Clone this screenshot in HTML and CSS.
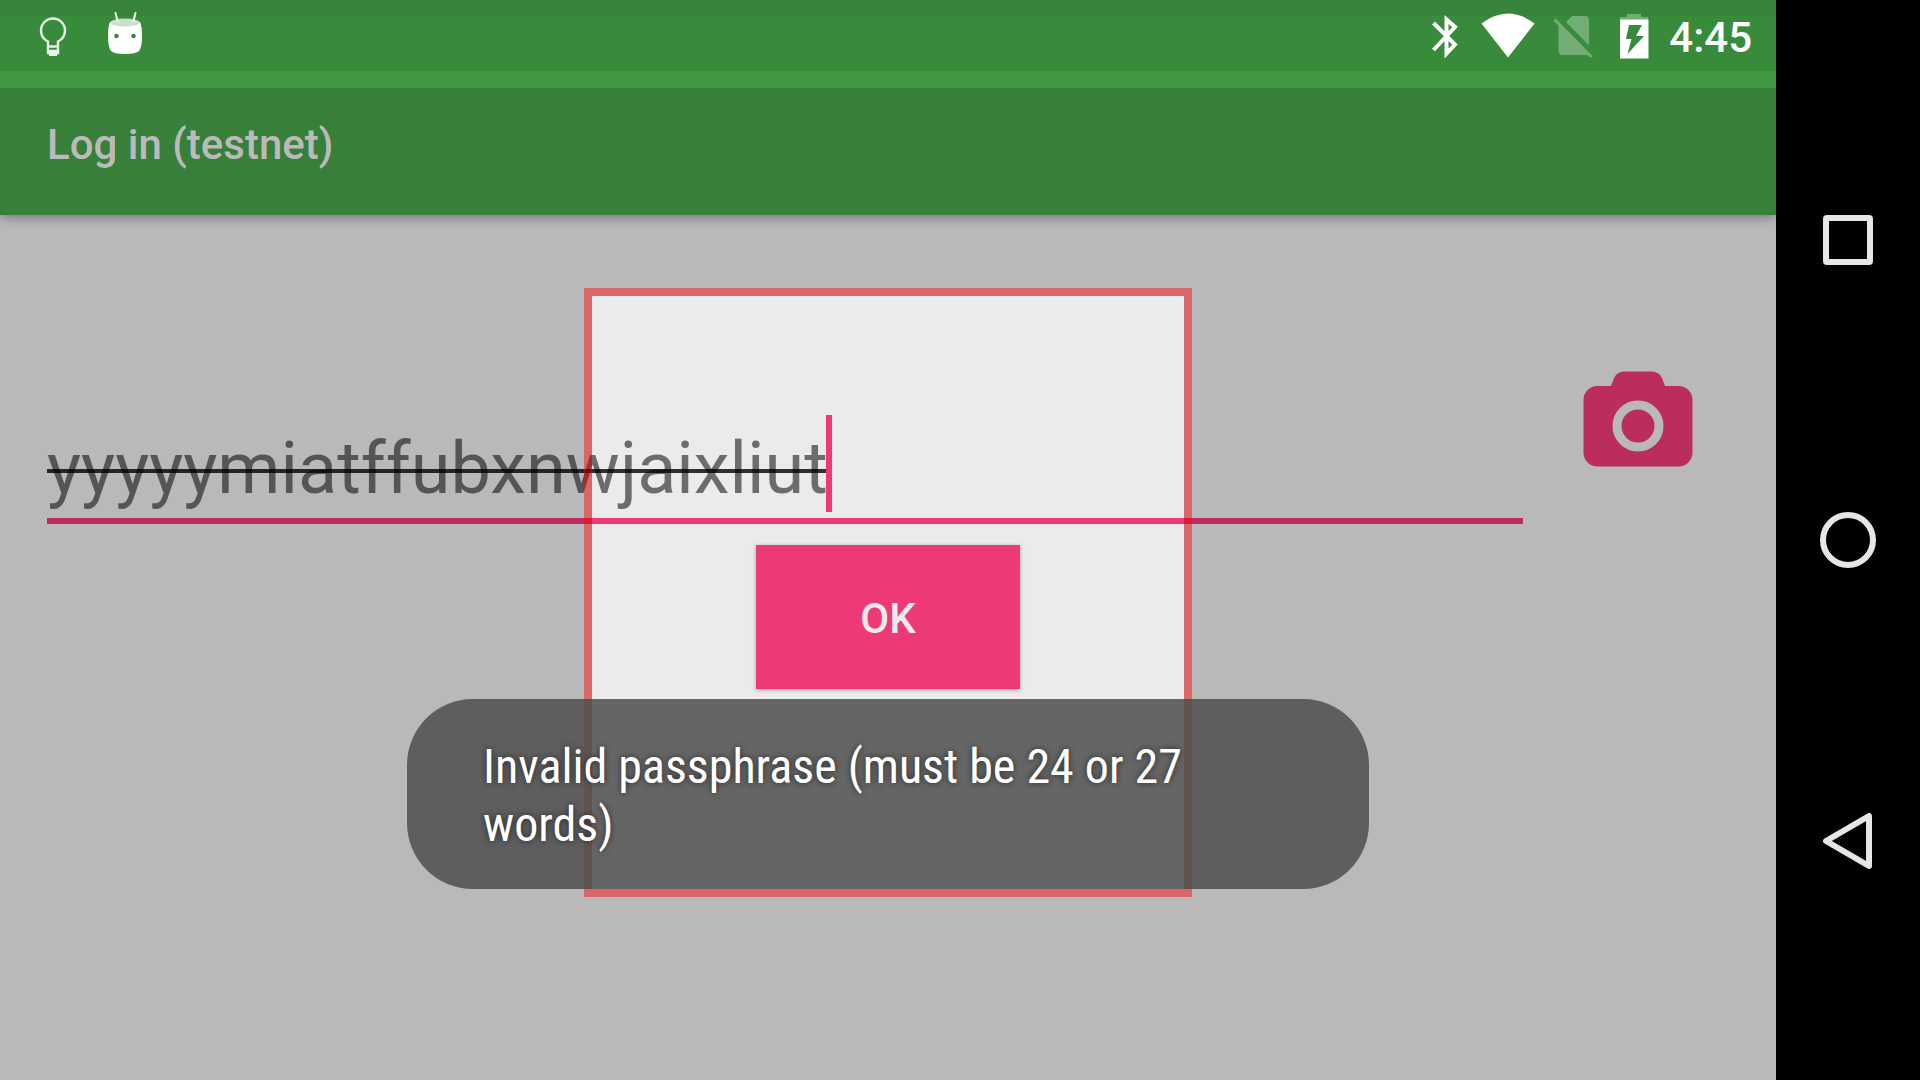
FILE: index.html
```
<!DOCTYPE html>
<html lang="en">
<head>
<meta charset="utf-8">
<title>Log in (testnet)</title>
<link rel="stylesheet" href="styles.css">
</head>
<body>
<div class="app">
  <div class="status-bar">
    <div class="status-group notifications">
      <svg width="28" height="48" viewBox="0 0 28 48" fill="none" stroke="#e8f2e8" stroke-width="2.400"><path d="M9 29.500C4 27 2 23 2 18.500A12 12 0 0 1 26 18.500C26 23 24 27 19 29.500V41H9z"/><path d="M9 34.500H19M9 39H19"/><path d="M10 42H18" stroke-width="4"/></svg>
      <svg width="36" height="48" viewBox="0 0 36 48"><path d="M3 10Q18 5 33 10Q35 14 35 24Q35 35 32 39Q29 42 18 42Q7 42 4 39Q1 35 1 24Q1 14 3 10z" fill="#fff"/><ellipse cx="18" cy="10.500" rx="14.500" ry="4" fill="#c9dfca"/><path d="M8.500 1L10.500 9M28.500 1L26.500 9" stroke="#fff" stroke-width="2" stroke-linecap="round"/><circle cx="9.500" cy="24" r="2.300" fill="#388a3b"/><circle cx="26.500" cy="24" r="2.300" fill="#388a3b"/></svg>
    </div>
    <div class="status-group">
      <svg width="28" height="48" viewBox="0 0 28 48" fill="none" stroke="#fff" stroke-width="4"><path d="M2.500 11L24 32.500L15.500 41.500V7.500L24 15L2.500 38"/></svg>
      <svg class="wifi" width="54" height="48" viewBox="0 0 54 48"><path d="M.5 11.500Q27 -8.500 53.500 11.500L27 45.500z" fill="#fff"/></svg>
      <svg class="sim" width="40" height="48" viewBox="0 0 40 48" fill="#73ad76"><path d="M19 4H32Q36 4 36 8V33.500L13 10z"/><path d="M5.500 11.500L37 43H9.500Q5.500 43 5.500 39z"/><path d="M1.500 7.500L38.500 45" stroke="#73ad76" stroke-width="3.200"/></svg>
      <svg class="battery" width="30" height="48" viewBox="0 0 30 48"><path d="M8 2H22V5H29V8H1V5H8z" fill="#73ad76"/><path d="M1 7.500H29.500V46.500H1z" fill="#fff"/><path d="M10 13H23L17 24H25L8.500 42L12.500 27H7z" fill="#388a3b"/></svg>
      <time class="clock">4:45</time>
    </div>
  </div>
  <header class="app-bar"><h1>Log in (testnet)</h1></header>
  <main class="content">
    <form class="login">
      <div class="field-row">
        <div class="field">
          <input type="text" aria-label="Passphrase" value="yyyyymiatffubxnwjaixliut" spellcheck="false">
          <span class="caret"></span>
        </div>
        <button class="camera" type="button" aria-label="Scan code">
          <svg width="110" height="96" viewBox="0 0 110 96" fill="#ed3a77"><path d="M14.500 15H28L31 7Q34 0.500 41 0.500H69Q76 0.500 79 7L82 15H95.500A14 14 0 0 1 109.500 29V81.500A14 14 0 0 1 95.500 95.500H14.500A14 14 0 0 1 .5 81.500V29A14 14 0 0 1 14.500 15z"/><circle cx="55" cy="55" r="21" fill="none" stroke="#ebebeb" stroke-width="9"/></svg>
        </button>
      </div>
      <button class="ok" type="button">OK</button>
    </form>
    <div class="viewfinder"></div>
    <div class="toast" role="status">Invalid passphrase (must be 24 or 27<br>words)</div>
  </main>
</div>
<nav class="nav-bar">
  <button type="button" aria-label="Recent apps"><svg width="60" height="60" viewBox="0 0 60 60"><rect x="8" y="8" width="44" height="44" rx="1"/></svg></button>
  <button type="button" aria-label="Home"><svg width="60" height="60" viewBox="0 0 60 60"><circle cx="30" cy="30" r="25"/></svg></button>
  <button type="button" aria-label="Back"><svg width="60" height="60" viewBox="0 0 60 60"><path d="M8 31L51 6V56z"/></svg></button>
</nav>
</body>
</html>
```
FILE: styles.css
```
* {
  box-sizing: border-box;
}

body {
  margin: 0;
  min-height: 100vh;
  display: flex;
  background: #000;
  font-family: Roboto, sans-serif;
}

button {
  padding: 0;
  border: 0;
  background: none;
  font: inherit;
}

svg {
  display: block;
}

.app {
  flex: 1;
  min-width: 0;
  display: flex;
  flex-direction: column;
  background: #ebebeb;
}

.status-bar {
  position: relative;
  z-index: 2;
  height: 88px;
  padding: 12px 24px 0 39px;
  display: flex;
  justify-content: space-between;
  align-items: flex-start;
  background: linear-gradient(#368339 16px, #388b3b 16px 71px, #409843 71px);
}

.status-group {
  display: flex;
  align-items: flex-start;
}

.notifications {
  gap: 40px;
}

.wifi {
  margin-left: 22px;
}

.sim {
  margin-left: 18px;
}

.battery {
  margin-left: 26px;
}

.clock {
  margin-left: 20px;
  color: #fff;
  font-size: 42px;
  font-weight: 500;
  line-height: 52px;
}

.app-bar {
  position: relative;
  z-index: 1;
  height: 127px;
  padding: 0 47px;
  display: flex;
  align-items: center;
  background: #38803a;
  box-shadow: 0 2px 12px rgba(0, 0, 0, .4);
}

.app-bar h1 {
  margin: 0 0 14px;
  color: #bababa;
  font-size: 42px;
  font-weight: 500;
  line-height: 48px;
}

.content {
  position: relative;
  flex: 1;
  overflow: hidden;
}

.login {
  padding-top: 156px;
  display: flex;
  flex-direction: column;
  align-items: center;
}

.field-row {
  align-self: stretch;
  padding: 0 83px 0 47px;
  display: flex;
  gap: 60px;
}

.field {
  position: relative;
  flex: 1;
  padding-top: 44px;
}

.field input {
  display: block;
  width: 100%;
  height: 109px;
  padding: 3px 0 0;
  border: 0;
  border-bottom: 6px solid #ed3a77;
  outline: 0;
  background: none;
  color: rgba(0, 0, 0, .54);
  font: 72px/84px Roboto, sans-serif;
  text-decoration: line-through 4px rgba(0, 0, 0, .8);
}

.caret {
  position: absolute;
  left: 779px;
  bottom: 12px;
  width: 6px;
  height: 97px;
  background: #ed3a77;
}

.camera {
  align-self: flex-start;
}

.ok {
  width: 264px;
  height: 144px;
  margin-top: 21px;
  padding-top: 2px;
  background: #ed3a77;
  box-shadow: 0 1px 4px rgba(0, 0, 0, .3);
  color: #ebebeb;
  font-size: 42px;
  font-weight: 500;
}

/* Scanner frame: everything outside the border is dimmed */
.viewfinder {
  position: absolute;
  top: 73px;
  left: 50%;
  width: 608px;
  height: 609px;
  transform: translateX(-50%);
  border: 8px solid rgba(204, 0, 0, .56);
  box-shadow: 0 0 0 200vmax rgba(0, 0, 0, .21);
  pointer-events: none;
}

.toast {
  position: absolute;
  top: 484px;
  left: 50%;
  width: 962px;
  padding: 39px 76px 35px;
  transform: translateX(-50%);
  border-radius: 66px;
  background: rgba(80, 80, 80, .87);
  color: #fff;
  font: 48px/58px "Roboto Condensed", "Liberation Sans Narrow", Roboto, sans-serif;
  text-shadow: 0 0 6px rgba(0, 0, 0, .6);
}

.nav-bar {
  width: 144px;
  padding-right: 1px;
  display: flex;
  flex-direction: column;
  justify-content: center;
}

.nav-bar button {
  height: 300px;
  display: flex;
  align-items: center;
  justify-content: center;
}

.nav-bar svg {
  fill: none;
  stroke: #e6e6e6;
  stroke-width: 6px;
  stroke-linejoin: round;
}
```
